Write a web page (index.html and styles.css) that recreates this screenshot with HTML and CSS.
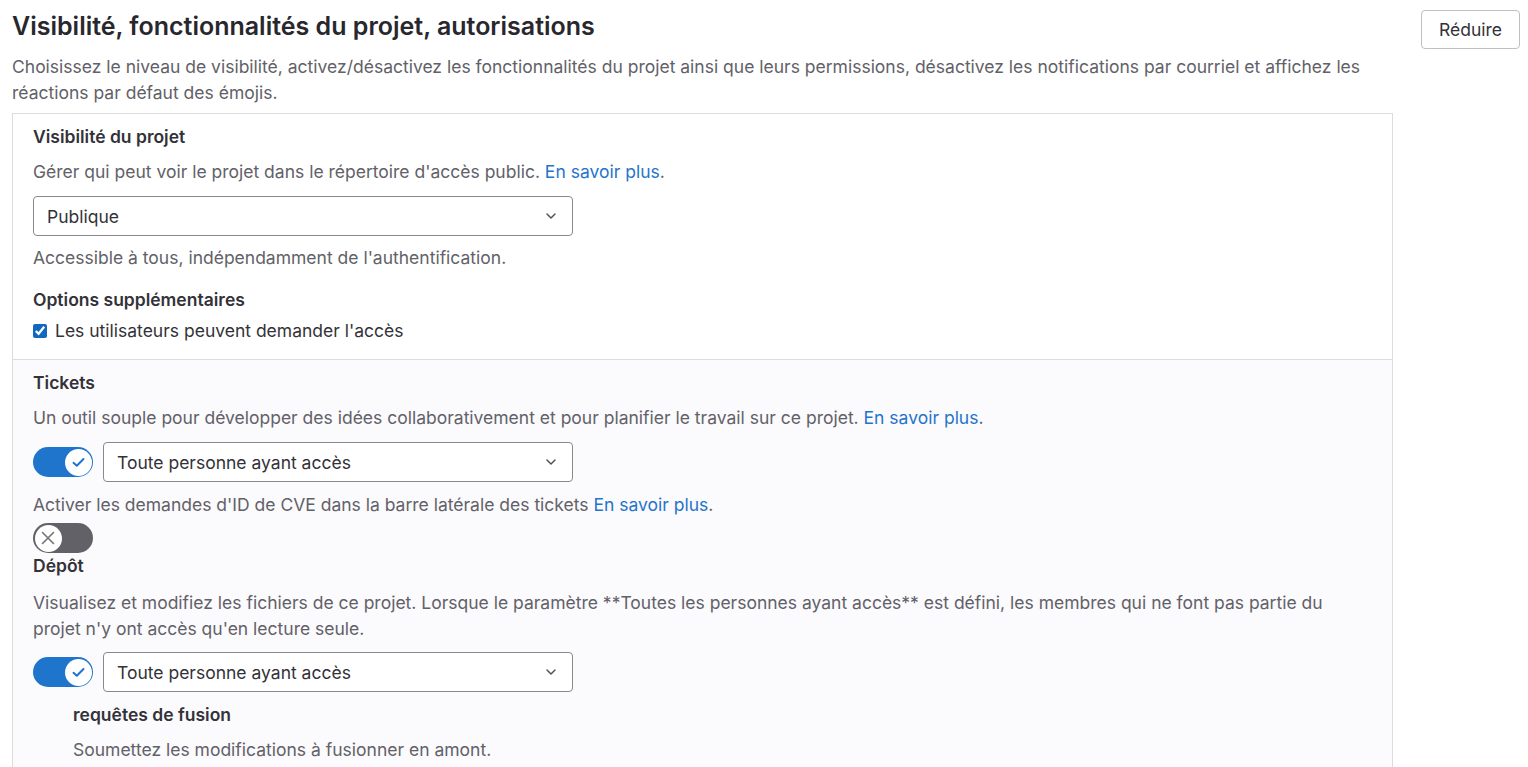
FILE: index.html
```html
<!DOCTYPE html>
<html lang="fr">
<head>
<meta charset="utf-8">
<title>Visibilité</title>
<link rel="stylesheet" href="styles.css">
</head>
<body>
<div class="page">
  <div class="section-head">
    <div class="head-text">
      <h2 class="title">Visibilité, fonctionnalités du projet, autorisations</h2>
      <p class="lead">Choisissez le niveau de visibilité, activez/désactivez les fonctionnalités du projet ainsi que leurs permissions, désactivez les notifications par courriel et affichez les réactions par défaut des émojis.</p>
    </div>
    <button class="btn">Réduire</button>
  </div>

  <div class="card">
    <div class="card-top">
      <div class="label">Visibilité du projet</div>
      <p class="desc m9">Gérer qui peut voir le projet dans le répertoire d'accès public. <a class="link">En savoir plus</a>.</p>
      <div class="select select-wide m11">
        <span>Publique</span>
        <svg class="chev" width="12" height="8" viewBox="0 0 12 8"><path d="M2 2l4 4 4-4" fill="none" stroke="#535158" stroke-width="1.5" stroke-linecap="round" stroke-linejoin="round"/></svg>
      </div>
      <p class="desc m9">Accessible à tous, indépendamment de l'authentification.</p>
      <div class="label m16">Options supplémentaires</div>
      <label class="check-row m5"><input type="checkbox" checked class="cb"><span>Les utilisateurs peuvent demander l'accès</span></label>
    </div>
    <div class="card-bottom">
      <div class="label">Tickets</div>
      <p class="desc m9">Un outil souple pour développer des idées collaborativement et pour planifier le travail sur ce projet. <a class="link">En savoir plus</a>.</p>
      <div class="ctrl-row m11">
        <span class="toggle on"><span class="knob"><svg width="13" height="11" viewBox="0 0 13 11"><path d="M1.5 5.8 4.8 8.8 11.5 2" fill="none" stroke="#1f75cb" stroke-width="2" stroke-linecap="round" stroke-linejoin="round"/></svg></span></span>
        <div class="select">
          <span>Toute personne ayant accès</span>
          <svg class="chev" width="12" height="8" viewBox="0 0 12 8"><path d="M2 2l4 4 4-4" fill="none" stroke="#535158" stroke-width="1.5" stroke-linecap="round" stroke-linejoin="round"/></svg>
        </div>
      </div>
      <p class="desc m10">Activer les demandes d'ID de CVE dans la barre latérale des tickets <a class="link">En savoir plus</a>.</p>
      <div class="m5"><span class="toggle off"><span class="knob"><svg width="14" height="14" viewBox="0 0 14 14"><path d="M1.5 1.5l11 11M12.5 1.5l-11 11" fill="none" stroke="#737278" stroke-width="1.6" stroke-linecap="round"/></svg></span></span></div>
      <div class="label">Dépôt</div>
      <p class="desc m11">Visualisez et modifiez les fichiers de ce projet. Lorsque le paramètre **Toutes les personnes ayant accès** est défini, les membres qui ne font pas partie du projet n'y ont accès qu'en lecture seule.</p>
      <div class="ctrl-row m10">
        <span class="toggle on"><span class="knob"><svg width="13" height="11" viewBox="0 0 13 11"><path d="M1.5 5.8 4.8 8.8 11.5 2" fill="none" stroke="#1f75cb" stroke-width="2" stroke-linecap="round" stroke-linejoin="round"/></svg></span></span>
        <div class="select">
          <span>Toute personne ayant accès</span>
          <svg class="chev" width="12" height="8" viewBox="0 0 12 8"><path d="M2 2l4 4 4-4" fill="none" stroke="#535158" stroke-width="1.5" stroke-linecap="round" stroke-linejoin="round"/></svg>
        </div>
      </div>
      <div class="sub">
        <div class="label m10">requêtes de fusion</div>
        <p class="desc m9">Soumettez les modifications à fusionner en amont.</p>
      </div>
    </div>
  </div>
</div>
</body>
</html>
```
FILE: styles.css
```css
* { box-sizing: border-box; }
html, body { margin: 0; padding: 0; background: #fff; }
body {
  font-family: Inter, "Noto Sans", "Liberation Sans", sans-serif;
  font-size: 17.5px;
  color: #333238;
  overflow: hidden;
}
.page { padding: 9px 8px 0 12px; }
.section-head { display: flex; align-items: flex-start; }
.head-text { width: 1381px; }
.title {
  margin: 0;
  font-size: 25px;
  line-height: 34px;
  font-weight: 600;
  color: #28272d;
}
.lead {
  margin: 11px 0 0;
  line-height: 26px;
  color: #626168;
}
.btn {
  margin-left: auto;
  margin-top: 1px;
  width: 99px;
  height: 39px;
  border: 1px solid #bfbfc3;
  border-radius: 4px;
  background: #fff;
  font-family: inherit;
  font-size: 17.5px;
  color: #333238;
  padding: 0;
}
.card {
  margin-top: 7px;
  width: 1381px;
  border: 1px solid #dcdcde;
}
.card-top { padding: 10px 30px 15px 20px; background: #fff; border-bottom: 1px solid #dcdcde; }
.card-bottom { padding: 10px 30px 20px 20px; background: #fbfafd; }
.label { font-weight: 600; line-height: 26px; color: #333238; }
.desc { margin: 0; line-height: 26px; color: #626168; }
.link { color: #1f75cb; text-decoration: none; }
.m5 { margin-top: 5px; } .m9 { margin-top: 9px; }
.m10 { margin-top: 10px; } .m11 { margin-top: 11px; }
.m16 { margin-top: 16px; }
.select {
  display: flex; align-items: center; justify-content: space-between;
  width: 470px; height: 40px;
  border: 1px solid #89888d; border-radius: 4px;
  background: #fff;
  padding: 0 15px 0 13px;
  color: #333238;
}
.select-wide { width: 540px; }
.chev { display: block; }
.check-row { display: flex; align-items: center; gap: 8px; line-height: 26px; color: #333238; }
.cb { margin: 0; width: 14px; height: 14px; accent-color: #1068bf; }
.ctrl-row { display: flex; align-items: center; gap: 10px; }
.toggle {
  display: inline-flex; align-items: center;
  width: 60px; height: 30px; border-radius: 15px;
  padding: 0 1.5px; vertical-align: top;
}
.toggle.on { background: #1f75cb; justify-content: flex-end; }
.toggle.off { background: #626168; justify-content: flex-start; }
.knob {
  width: 27px; height: 27px; border-radius: 50%;
  background: #fff;
  display: flex; align-items: center; justify-content: center;
}
.knob svg { display: block; }
.sub { padding-left: 40px; }
```
